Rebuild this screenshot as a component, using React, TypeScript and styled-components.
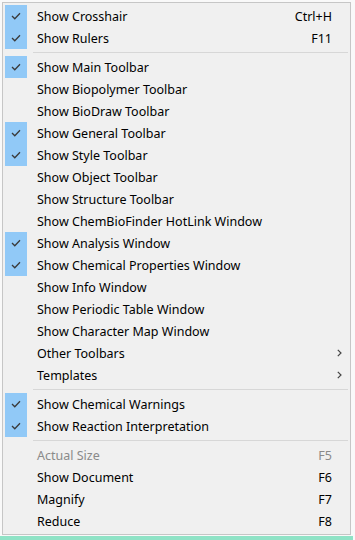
import React from "react";
import styled, { createGlobalStyle } from "styled-components";

const Global = createGlobalStyle`
  html, body { margin: 0; padding: 0; background: #f9f9f9; }
  body { width: 355px; height: 540px; overflow: hidden; position: relative; }
`;

const Page = styled.div`
  width: 355px;
  height: 540px;
  display: flex;
  flex-direction: column;
  padding: 2px 0 0 2px;
  box-sizing: border-box;
`;

const Menu = styled.div`
  width: 349px;
  box-sizing: border-box;
  border: 1px solid #c6c6c6;
  background: #f0f0f0;
  padding: 2px;
  display: flex;
  flex-direction: column;
  font-family: "Noto Sans", "Noto Sans CJK SC", sans-serif;
  font-size: 12.5px;
  color: #000;
`;

const Strip = styled.div`
  height: 4px;
  margin: 1px 0 0 -2px;
  width: 353px;
  background: #8fe3c6;
`;

const Row = styled.div<{ $disabled?: boolean }>`
  height: 22px;
  display: grid;
  grid-template-columns: 22px 1fr auto 16px;
  align-items: center;
  column-gap: 0;
  color: ${(p) => (p.$disabled ? "#8a8a8a" : "#000")};
`;

const CheckBox = styled.div<{ $on?: boolean }>`
  width: 22px;
  height: 22px;
  background: ${(p) => (p.$on ? "#91c9f7" : "transparent")};
  display: flex;
  align-items: center;
  justify-content: center;
`;

const Label = styled.span`
  padding-left: 10px;
  padding-top: 1px;
  white-space: nowrap;
  line-height: 21px;
`;

const Shortcut = styled.span`
  white-space: nowrap;
  text-align: right;
  padding-top: 1px;
  line-height: 21px;
`;

const Arrow = styled.span`
  display: flex;
  align-items: center;
  justify-content: flex-start;
  padding-left: 5px;
`;

const Sep = styled.div`
  height: 7px;
  display: flex;
  align-items: center;
  padding-left: 28px;
  &::after {
    content: "";
    flex: 1;
    height: 1px;
    background: #d7d7d7;
  }
`;

const Check = () => (
  <svg width="10" height="8" viewBox="0 0 10 8">
    <polyline points="1,4 3.8,6.8 9,1.2" fill="none" stroke="#3a3a3a" strokeWidth="1.3" />
  </svg>
);

const Chevron = () => (
  <svg width="5" height="8" viewBox="0 0 5 8">
    <polyline points="0.8,0.8 4,4 0.8,7.2" fill="none" stroke="#444" strokeWidth="1.2" />
  </svg>
);

type Item = { label: string; checked?: boolean; shortcut?: string; sub?: boolean; disabled?: boolean } | "sep";

const items: Item[] = [
  { label: "Show Crosshair", checked: true, shortcut: "Ctrl+H" },
  { label: "Show Rulers", checked: true, shortcut: "F11" },
  "sep",
  { label: "Show Main Toolbar", checked: true },
  { label: "Show Biopolymer Toolbar" },
  { label: "Show BioDraw Toolbar" },
  { label: "Show General Toolbar", checked: true },
  { label: "Show Style Toolbar", checked: true },
  { label: "Show Object Toolbar" },
  { label: "Show Structure Toolbar" },
  { label: "Show ChemBioFinder HotLink Window" },
  { label: "Show Analysis Window", checked: true },
  { label: "Show Chemical Properties Window", checked: true },
  { label: "Show Info Window" },
  { label: "Show Periodic Table Window" },
  { label: "Show Character Map Window" },
  { label: "Other Toolbars", sub: true },
  { label: "Templates", sub: true },
  "sep",
  { label: "Show Chemical Warnings", checked: true },
  { label: "Show Reaction Interpretation", checked: true },
  "sep",
  { label: "Actual Size", shortcut: "F5", disabled: true },
  { label: "Show Document", shortcut: "F6" },
  { label: "Magnify", shortcut: "F7" },
  { label: "Reduce", shortcut: "F8" },
];

export default function App() {
  return (
    <>
      <Global />
      <Page>
        <Menu>
          {items.map((it, i) =>
            it === "sep" ? (
              <Sep key={i} />
            ) : (
              <Row key={i} $disabled={it.disabled}>
                <CheckBox $on={it.checked}>{it.checked && <Check />}</CheckBox>
                <Label>{it.label}</Label>
                <Shortcut>{it.shortcut ?? ""}</Shortcut>
                <Arrow>{it.sub && <Chevron />}</Arrow>
              </Row>
            )
          )}
        </Menu>
        <Strip />
      </Page>
    </>
  );
}
